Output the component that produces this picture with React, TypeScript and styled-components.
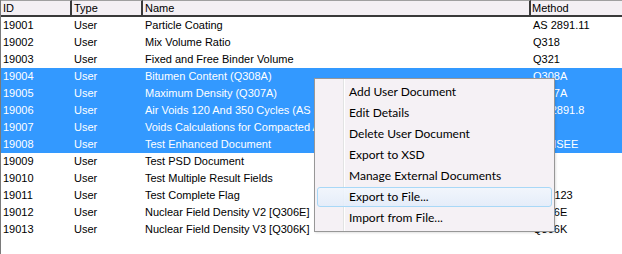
import styled, { createGlobalStyle } from 'styled-components';

interface IDoc {
  id: string;
  type: string;
  name: string;
  method: string;
  selected?: boolean;
}

const docs: IDoc[] = [
  { id: '19001', type: 'User', name: 'Particle Coating', method: 'AS 2891.11' },
  { id: '19002', type: 'User', name: 'Mix Volume Ratio', method: 'Q318' },
  { id: '19003', type: 'User', name: 'Fixed and Free Binder Volume', method: 'Q321' },
  { id: '19004', type: 'User', name: 'Bitumen Content (Q308A)', method: 'Q308A', selected: true },
  { id: '19005', type: 'User', name: 'Maximum Density (Q307A)', method: 'Q307A', selected: true },
  { id: '19006', type: 'User', name: 'Air Voids 120 And 350 Cycles (AS 2891.8)', method: 'AS 2891.8', selected: true },
  { id: '19007', type: 'User', name: 'Voids Calculations for Compacted Asphalt', method: '', selected: true },
  { id: '19008', type: 'User', name: 'Test Enhanced Document', method: 'ENHSEE', selected: true },
  { id: '19009', type: 'User', name: 'Test PSD Document', method: '' },
  { id: '19010', type: 'User', name: 'Test Multiple Result Fields', method: '' },
  { id: '19011', type: 'User', name: 'Test Complete Flag', method: 'TCF123' },
  { id: '19012', type: 'User', name: 'Nuclear Field Density V2 [Q306E]', method: 'Q306E' },
  { id: '19013', type: 'User', name: 'Nuclear Field Density V3 [Q306K]', method: 'Q306K' },
];

const menuItems = [
  'Add User Document',
  'Edit Details',
  'Delete User Document',
  'Export to XSD',
  'Manage External Documents',
  'Export to File...',
  'Import from File...',
];

const hoveredItem = 'Export to File...';

export default function App() {
  return (
    <>
      <GlobalStyle />
      <Window>
        <Grid>
          <HeaderCell>ID</HeaderCell>
          <HeaderCell>Type</HeaderCell>
          <HeaderCell>Name</HeaderCell>
          <HeaderCell $last>Method</HeaderCell>

          {docs.map((doc) => (
            <Row key={doc.id} $selected={doc.selected}>
              <Cell>{doc.id}</Cell>
              <Cell>{doc.type}</Cell>
              <Cell>{doc.name}</Cell>
              <Cell>{doc.method}</Cell>
            </Row>
          ))}
        </Grid>

        <ContextMenu>
          {menuItems.map((item) => (
            <MenuItem key={item} $hover={item === hoveredItem}>
              {item}
            </MenuItem>
          ))}
        </ContextMenu>
      </Window>
    </>
  );
}

const GlobalStyle = createGlobalStyle`
  html, body {
    margin: 0;
    padding: 0;
    background: #ffffff;
  }
`;

const Window = styled.div`
  position: relative;
  width: 622px;
  height: 254px;
  box-sizing: border-box;
  border-left: 1px solid #7a7a7a;
  background: #ffffff;
  overflow: hidden;
  font-family: 'Liberation Sans', Arial, sans-serif;
  font-size: 11px;
  color: #000000;
`;

const Grid = styled.div`
  display: grid;
  grid-template-columns: 71px 71px 388px 1fr;
  grid-auto-rows: 17px;
`;

const HeaderCell = styled.div<{ $last?: boolean }>`
  box-sizing: border-box;
  height: 17px;
  padding-left: ${(p) => (p.$last ? '1px' : '2px')};
  line-height: 14px;
  background: #f4f0f4;
  border-top: 1px solid #a0a0a0;
  border-bottom: 2px solid #3a3a3a;
  border-right: ${(p) => (p.$last ? 'none' : '2px solid #3a3a3a')};
  white-space: nowrap;
  overflow: hidden;
`;

const Row = styled.div<{ $selected?: boolean }>`
  display: contents;

  & > div {
    background: ${(p) => (p.$selected ? '#3399ff' : '#ffffff')};
    color: ${(p) => (p.$selected ? '#ffffff' : '#000000')};
  }
`;

const Cell = styled.div`
  height: 17px;
  line-height: 17px;
  padding-left: 2px;
  white-space: nowrap;
  overflow: hidden;
`;

const ContextMenu = styled.div`
  position: absolute;
  left: 313px;
  top: 78px;
  width: 241px;
  box-sizing: border-box;
  padding: 2px;
  border: 1px solid #979797;
  background:
    linear-gradient(
      to right,
      transparent 28px,
      #e2e3e3 28px,
      #e2e3e3 29px,
      #ffffff 29px,
      #ffffff 30px,
      transparent 30px
    ),
    #f5f1f5;
  box-shadow: 1px 1px 2px rgba(0, 0, 0, 0.12);
  font-family: Lato, 'Segoe UI', sans-serif;
  font-size: 12px;
  color: #000000;
`;

const MenuItem = styled.div<{ $hover?: boolean }>`
  box-sizing: border-box;
  height: 20px;
  margin: 1px 0;
  padding-left: 31px;
  line-height: 18px;
  border-radius: 3px;
  white-space: nowrap;
  border: 1px solid ${(p) => (p.$hover ? '#a8d8f7' : 'transparent')};
  background: ${(p) =>
    p.$hover
      ? 'linear-gradient(to bottom, rgba(241,246,253,0.85), rgba(226,236,250,0.85))'
      : 'transparent'};
`;
